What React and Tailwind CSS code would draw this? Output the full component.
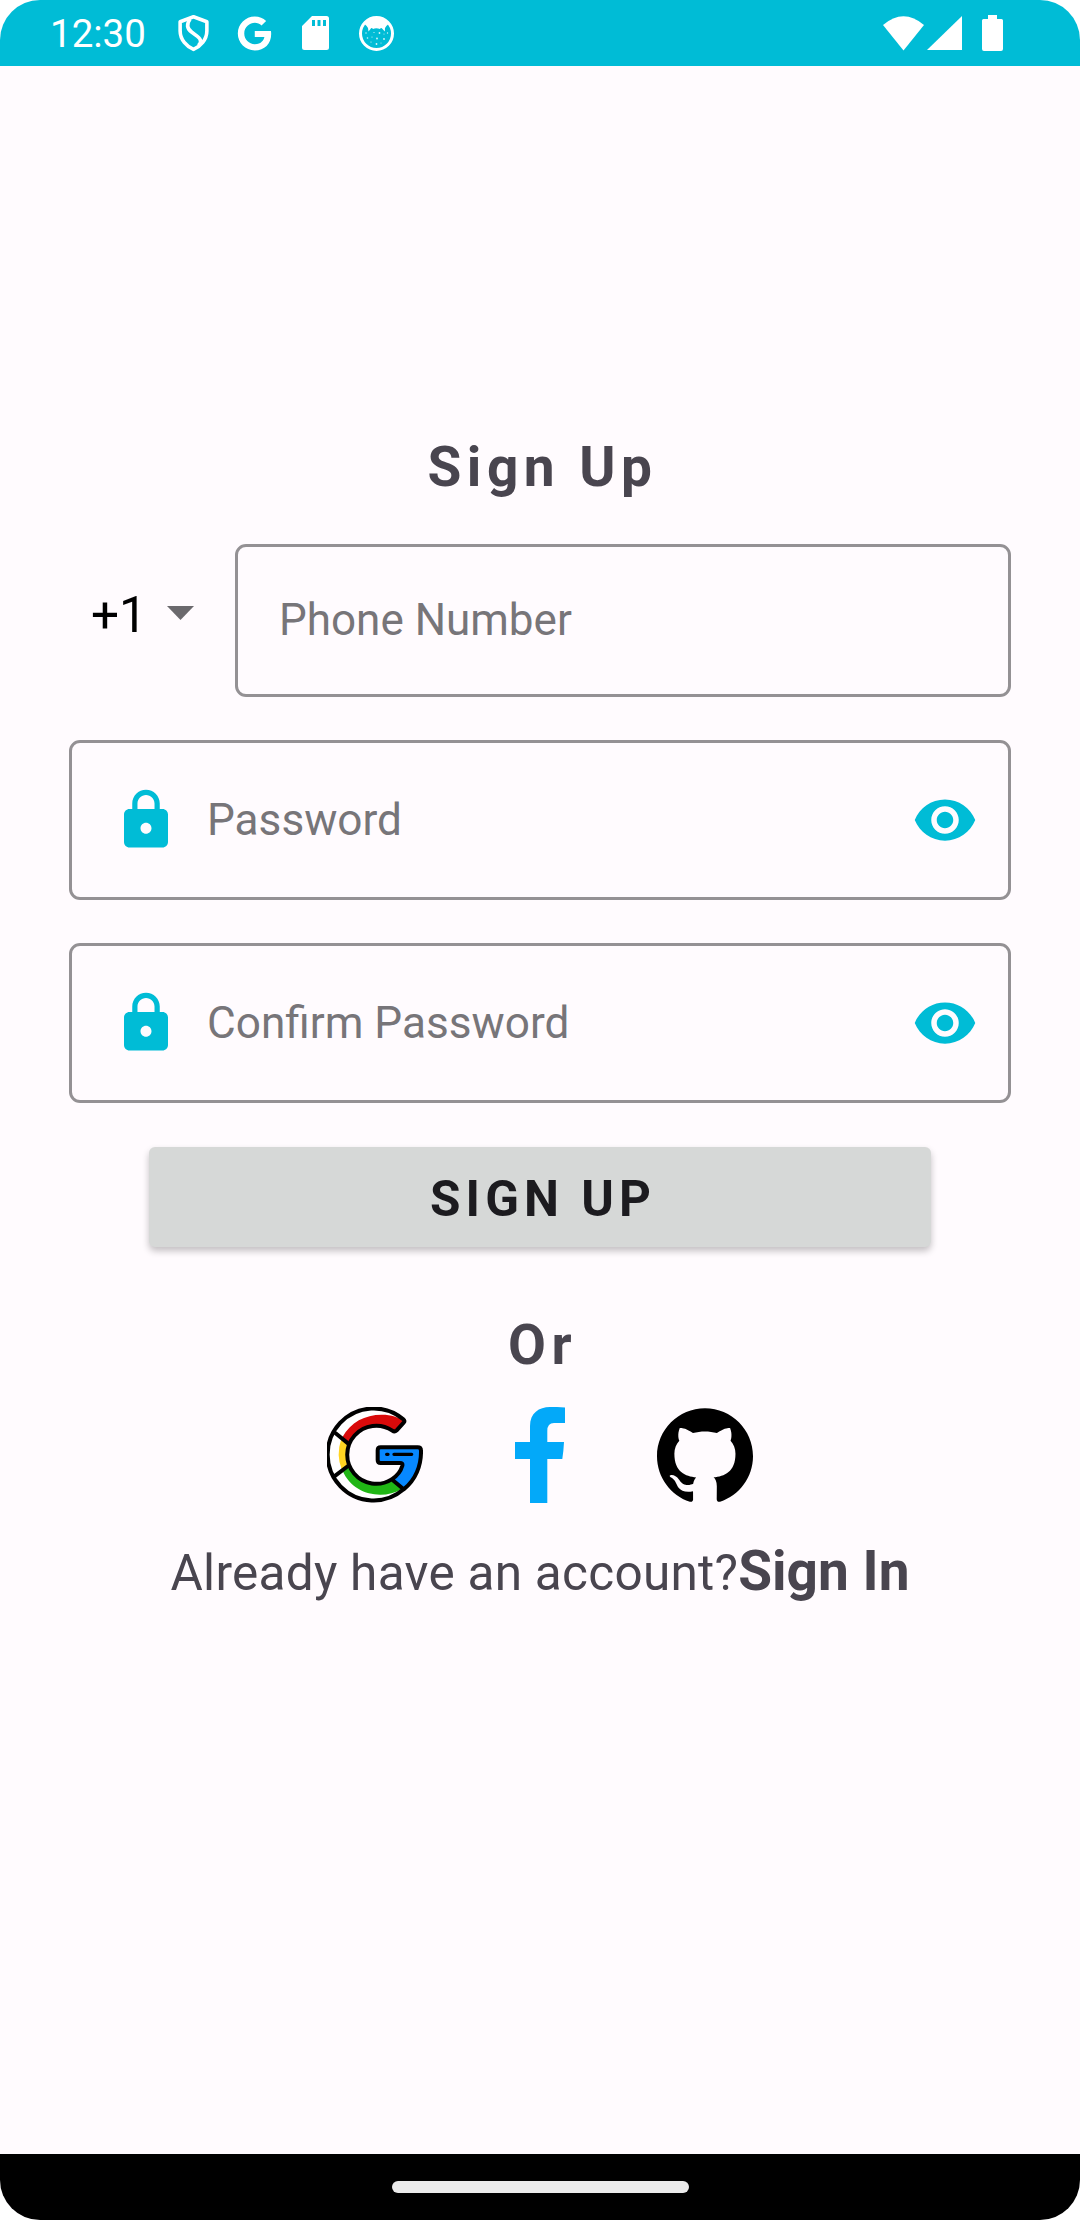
import { FaGoogle } from "react-icons/fa";
import { MdLock, MdVisibility } from "react-icons/md";
import { SiGithub } from "react-icons/si";

function StatusBar() {
  return (
    <header className="flex h-[66px] shrink-0 items-center bg-[#00bcd6] pl-[50px] text-white">
      <span className="w-[99px] pt-[2px] text-[38.5px] leading-[66px]">12:30</span>
      <svg className="ml-[29px] h-[38px] w-[31px]" viewBox="0 0 32 38" fill="none" stroke="currentColor" strokeWidth="3.7" strokeLinejoin="round">
        <path d="M16 2.2 L29.800 7.400 V17 C29.800 26 23 33 16 36 C9 33 2.200 26 2.200 17 V7.400Z" />
        <path d="M12.500 4.500 C8.500 10 9.500 14.500 14 18 L20 22.500 C24.500 26 24 29 21 32" />
      </svg>
      <FaGoogle className="ml-[28px] h-[35px] w-[35px]" />
      <svg className="ml-[30px] h-[34px] w-[27px]" viewBox="0 0 27 34">
        <path fill="currentColor" fillRule="evenodd" d="M10 0 H24.500 Q27 0 27 2.500 V31.500 Q27 34 24.500 34 H2.500 Q0 34 0 31.500 V10Z M10 4 V10 H13 V4Z M15.500 4 V10 H18.500 V4Z M21 4 V10 H24 V4Z" />
      </svg>
      <svg className="ml-[30px] h-[35px] w-[35px]" viewBox="0 0 35 35">
        <circle cx="17.5" cy="17.5" r="16" fill="none" stroke="currentColor" strokeWidth="3" />
        <path fill="currentColor" d="M5.500 8 Q10 1 17.500 1 Q25 1 29.500 8 Q27 10 26 12 L25.800 15.500 L23.500 13 Q22 11 21 13 Q17 11.500 14 13 Q12.500 11 11.500 13 L9.500 15.500 L9 12 Q8 10 5.500 8Z" />
        <g fill="currentColor" opacity=".85">
          <circle cx="7" cy="17" r=".7" /><circle cx="15" cy="16.5" r=".6" /><circle cx="20.500" cy="17" r=".9" /><circle cx="25" cy="18" r=".5" />
          <circle cx="28.500" cy="17" r=".7" /><circle cx="8.500" cy="22" r=".8" /><circle cx="13" cy="21" r=".6" /><circle cx="18" cy="22.500" r=".9" />
          <circle cx="25" cy="23" r=".9" /><circle cx="12" cy="26" r=".6" /><circle cx="17.500" cy="28" r=".9" /><circle cx="22" cy="27" r=".5" />
        </g>
      </svg>
      <svg className="ml-auto h-[35px] w-[41px]" viewBox="0 0 41 35">
        <path fill="currentColor" d="M0 9 Q20.500 -8.500 41 9 L20.500 34.500Z" />
      </svg>
      <svg className="ml-[3px] h-[34px] w-[35px]" viewBox="0 0 35 34">
        <path fill="currentColor" d="M35 0 V34 H0Z" />
      </svg>
      <svg className="mr-[77px] ml-[20px] h-[36px] w-[21px]" viewBox="0 0 21 36">
        <path fill="currentColor" d="M6 0 H15 V4 H19.500 Q21 4 21 5.500 V34 Q21 36 19 36 H2 Q0 36 0 34 V5.500 Q0 4 1.500 4 H6Z" />
      </svg>
    </header>
  );
}

function PasswordField({ label }) {
  return (
    <div className="flex h-[160px] items-center rounded-[11px] border-[3px] border-[#949194] pr-[30px] pl-[41px]">
      <MdLock className="size-[66px] text-[#00bcd6]" />
      <span className="ml-[28px] flex-1 text-[44.15px] leading-[52px] text-[#777579]">{label}</span>
      <MdVisibility className="size-[66px] text-[#00bcd6]" />
    </div>
  );
}

function GoogleLogo() {
  return (
    <svg className="size-[96px]" viewBox="51 51 288 288" strokeLinecap="round" strokeLinejoin="round">
      <path fill="#fff" d="M283 93 A138 138 0 1 0 281 297 L245 268 A86 86 0 1 1 253 124Z" />
      <path fill="#d90a0a" d="M97 142 C122 96 165 74 215 74 C245 74 265 82 283 93 L253 127 A90 90 0 0 0 116 161Z" />
      <path fill="#ffd422" d="M93 150 L116 161 Q104 195 116 228 L95 238 Q78 194 93 150Z" />
      <path fill="#20b615" d="M97 241 L116 229 A90 90 0 0 0 245 268 L276 297 C220 330 130 318 97 241Z" />
      <path fill="#0788ff" d="M212 172 H323 Q333 172 333 182 C334 226 317 270 282 298 L245 268 Q270 252 277 227 Q279 219 270 219 H212 Q203 219 203 210 V181 Q203 172 212 172Z" />
      <g fill="none" stroke="#000" strokeWidth="12">
        <path d="M281 298 A138 138 0 1 1 280 88 Q286 93 281 98 L260 121 Q254 127 247 122 A87 87 0 1 0 245 268 Q270 252 277 227 Q279 219 270 219 H212 Q203 219 203 210 V181 Q203 172 212 172 H323 Q333 172 333 182 C334 226 317 270 281 298 L245 268" />
        <path d="M76 129 L114 160 M76 257 L114 228" />
      </g>
      <path d="M230 193 H234 M252 193 H305" stroke="#000" strokeWidth="10" />
    </svg>
  );
}

function FacebookLogo() {
  return (
    <svg className="h-[96px] w-[50px]" viewBox="15 17 50 96">
      <path fill="#03a9f9" d="M30 113 V69 H15 V52 H30 V36 C30 23 39 17 50 17 Q58 16.800 65 17.500 V33 H54 Q47.300 33 47.300 41 V52 H64 Q63.500 62 62.300 69 H47.300 V113Z" />
    </svg>
  );
}

export default function App() {
  return (
    <div className="bg-white">
      <div className="flex h-[2220px] w-[1080px] flex-col overflow-hidden rounded-[40px] bg-[#fffbfe] font-[Roboto,sans-serif]">
        <StatusBar />
        <main className="flex flex-1 flex-col px-[69px] pt-[369px] text-[#49454f]">
          <h1 className="pl-[5px] text-center text-[55px] leading-[64px] font-bold tracking-[5.5px]">Sign Up</h1>

          <div className="mt-[45px] flex h-[153px]">
            <div className="flex w-[166px] items-start pt-[42px] pl-[22px] text-black">
              <span className="w-[67px] text-[49.5px] leading-[58px]">+1</span>
              <svg className="mt-[20px] ml-[9px] h-[14px] w-[27px]" viewBox="0 0 27 14">
                <path fill="#6b696d" d="M0 0 H27 L13.500 14Z" />
              </svg>
            </div>
            <div className="flex flex-1 items-center rounded-[11px] border-[3px] border-[#949194] pb-px pl-[41px]">
              <span className="text-[44px] leading-[52px] text-[#777579]">Phone Number</span>
            </div>
          </div>

          <div className="mt-[43px] flex flex-col gap-[43px]">
            <PasswordField label="Password" />
            <PasswordField label="Confirm Password" />
          </div>

          <button className="mx-[80px] mt-[44px] h-[100px] rounded-[6px] bg-[#d6d8d7] pt-[4px] pl-[6px] text-[49.5px] leading-[96px] font-bold tracking-[5.05px] text-[#1c1b1f] shadow-[0_4px_7px_rgba(0,0,0,0.24)]">
            SIGN UP
          </button>

          <p className="mt-[66px] pl-[5px] text-center text-[55px] leading-[64px] font-bold tracking-[5.5px]">Or</p>

          <div className="mt-[30px] flex h-[96px] pl-[258px]">
            <GoogleLogo />
            <div className="ml-[92px]"><FacebookLogo /></div>
            <SiGithub className="ml-[92px] size-[96px] text-black" />
          </div>

          <p className="mt-[36px] flex items-baseline justify-center leading-[64px] whitespace-nowrap">
            <span className="text-[49.5px] tracking-[0.27px]">Already have an account?</span>
            <span className="text-[55px] font-bold">Sign In</span>
          </p>
        </main>
        <footer className="flex h-[66px] shrink-0 justify-center bg-black pt-[27px]">
          <div className="h-[12px] w-[297px] rounded-full bg-[#ebebeb]" />
        </footer>
      </div>
    </div>
  );
}
